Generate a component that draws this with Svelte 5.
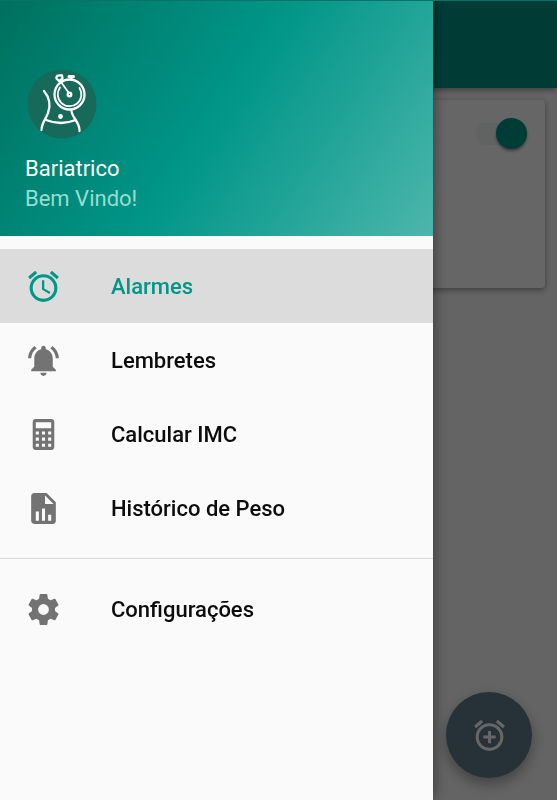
<script>
  const icons = {
    alarm:
      "M22 5.72l-4.6-3.86-1.29 1.53 4.6 3.86L22 5.72zM7.88 3.39L6.6 1.86 2 5.71l1.29 1.53 4.59-3.85zM12.5 8H11v6l4.75 2.85.75-1.23-4-2.37V8zM12 4c-4.97 0-9 4.03-9 9s4.02 9 9 9a9 9 0 0 0 0-18zm0 16c-3.87 0-7-3.13-7-7s3.13-7 7-7 7 3.13 7 7-3.13 7-7 7z",
    bell: "M7.58 4.08L6.15 2.65C3.75 4.48 2.17 7.3 2.03 10.5h2c.15-2.65 1.51-4.97 3.55-6.42zm12.39 6.42h2c-.15-3.2-1.73-6.02-4.12-7.85l-1.42 1.43c2.02 1.45 3.39 3.77 3.54 6.42zM18 11c0-3.07-1.64-5.64-4.5-6.32V4c0-.83-.67-1.5-1.5-1.5s-1.5.67-1.5 1.5v.68C7.63 5.36 6 7.92 6 11v5l-2 2v1h16v-1l-2-2v-5zm-6 11c1.1 0 2-.9 2-2h-4c0 1.1.9 2 2 2z",
    calculator:
      "M7,2H17A2,2 0 0,1 19,4V20A2,2 0 0,1 17,22H7A2,2 0 0,1 5,20V4A2,2 0 0,1 7,2M7,4V8H17V4H7M7,10V12H9V10H7M11,10V12H13V10H11M15,10V12H17V10H15M7,14V16H9V14H7M11,14V16H13V14H11M15,14V16H17V14H15M7,18V20H9V18H7M11,18V20H13V18H11M15,18V20H17V18H15Z",
    chart:
      "M13,9H18.5L13,3.5V9M6,2H14L20,8V20A2,2 0 0,1 18,22H6C4.89,22 4,21.1 4,20V4C4,2.89 4.89,2 6,2M7,20H9V14H7V20M11,20H13V12H11V20M15,20H17V16H15V20Z",
    settings:
      "M12,15.5A3.5,3.5 0 0,1 8.5,12A3.5,3.5 0 0,1 12,8.5A3.5,3.5 0 0,1 15.5,12A3.5,3.5 0 0,1 12,15.5M19.43,12.97C19.47,12.65 19.5,12.33 19.5,12C19.5,11.67 19.47,11.34 19.43,11L21.54,9.37C21.73,9.22 21.78,8.95 21.66,8.73L19.66,5.27C19.54,5.05 19.27,4.96 19.05,5.05L16.56,6.05C16.04,5.66 15.5,5.32 14.87,5.07L14.5,2.42C14.46,2.18 14.25,2 14,2H10C9.75,2 9.54,2.18 9.5,2.42L9.13,5.07C8.5,5.32 7.96,5.66 7.44,6.05L4.95,5.05C4.73,4.96 4.46,5.05 4.34,5.27L2.34,8.73C2.21,8.95 2.27,9.22 2.46,9.37L4.57,11C4.53,11.34 4.5,11.67 4.5,12C4.5,12.33 4.53,12.65 4.57,12.97L2.46,14.63C2.27,14.78 2.21,15.05 2.34,15.27L4.34,18.73C4.46,18.95 4.73,19.03 4.95,18.95L7.44,17.94C7.96,18.34 8.5,18.68 9.13,18.93L9.5,21.58C9.54,21.82 9.75,22 10,22H14C14.25,22 14.46,21.82 14.5,21.58L14.87,18.93C15.5,18.67 16.04,18.34 16.56,17.94L19.05,18.95C19.27,19.03 19.54,18.95 19.66,18.73L21.66,15.27C21.78,15.05 21.73,14.78 21.54,14.63L19.43,12.97Z",
    addAlarm:
      "M22 5.72l-4.6-3.86-1.29 1.53 4.6 3.86L22 5.72zM7.88 3.39L6.6 1.86 2 5.71l1.29 1.53 4.59-3.85zM12 4c-4.97 0-9 4.03-9 9s4.02 9 9 9a9 9 0 0 0 0-18zm0 16c-3.87 0-7-3.13-7-7s3.13-7 7-7 7 3.13 7 7-3.13 7-7 7zM13 9h-2v3H8v2h3v3h2v-3h3v-2h-3V9z",
  };

  // Each group is separated by a divider
  const groups = [
    [
      { id: "alarmes", label: "Alarmes", icon: icons.alarm },
      { id: "lembretes", label: "Lembretes", icon: icons.bell },
      { id: "imc", label: "Calcular IMC", icon: icons.calculator },
      { id: "historico", label: "Histórico de Peso", icon: icons.chart },
    ],
    [{ id: "configuracoes", label: "Configurações", icon: icons.settings }],
  ];

  let current = $state("alarmes");
  let enabled = $state(true);
</script>

<div class="screen">
  <header class="toolbar"></header>
  <main>
    <section class="card">
      <input
        class="switch"
        type="checkbox"
        role="switch"
        aria-label="Ativar alarme"
        bind:checked={enabled}
      />
    </section>
  </main>
  <button class="fab" aria-label="Adicionar alarme">
    <svg viewBox="0 0 24 24"><path d={icons.addAlarm} /></svg>
  </button>
</div>

<div class="scrim"></div>

<aside class="drawer">
  <div class="profile">
    <svg class="avatar" viewBox="0 0 70 70" aria-hidden="true">
      <circle class="disc" cx="35" cy="35" r="34.500" />
      <g class="lines">
        <path d="M17 22C22 28 24 36 21 44C19 50 14.500 54 14.500 61" />
        <path d="M44.500 42C45 49 53 53 52.500 62" />
        <path d="M19 51Q34 57 48.500 51" />
        <circle cx="42.500" cy="25.500" r="15" />
        <path class="thin" d="M33 18.500A11.800 11.800 0 1 0 52.500 19" />
        <circle cx="42.500" cy="25.500" r="1.800" />
        <path class="thin" d="M41.500 23.500L34 13" />
        <path d="M32.500 12.500L29.500 9.500C29 6.500 32 6 35 6.500L35.500 9.500L32.500 12" />
        <path class="crown" d="M42 7.500H46.500" />
        <path d="M44.500 8V10.500" />
      </g>
      <circle class="navel" cx="33.500" cy="47.500" r="2.400" />
    </svg>
    <span class="name">Bariatrico</span>
    <span class="welcome">Bem Vindo!</span>
  </div>

  <nav>
    {#each groups as group}
      <ul>
        {#each group as item}
          <li>
            <a
              href="#{item.id}"
              class:active={current === item.id}
              onclick={() => (current = item.id)}
            >
              <svg viewBox="0 0 24 24" aria-hidden="true"><path d={item.icon} /></svg>
              {item.label}
            </a>
          </li>
        {/each}
      </ul>
    {/each}
  </nav>
</aside>

<div class="statusbar"></div>

<style>
  :global(body) {
    font-family: Roboto, "Noto Sans", sans-serif;
    background: #fafafa;
  }

  .screen {
    min-height: 100vh;
    background: #fafafa;
  }

  .toolbar {
    height: 88px;
    background: #009688;
    box-shadow: 0 2px 6px rgba(0, 0, 0, 0.4);
  }

  main {
    padding: 12px;
  }

  .card {
    display: flex;
    justify-content: flex-end;
    align-items: flex-start;
    box-sizing: border-box;
    min-height: 188px;
    padding: 18px;
    background: #fff;
    border-radius: 4px;
    box-shadow: 0 2px 6px rgba(0, 0, 0, 0.4);
  }

  .switch {
    appearance: none;
    display: flex;
    align-items: center;
    width: 50px;
    height: 31px;
    margin: 0;
    background: linear-gradient(#f0f7f5, #f0f7f5) center / 100% 22px no-repeat;
    border-radius: 16px;
  }

  .switch::before {
    content: "";
    width: 31px;
    height: 31px;
    border-radius: 50%;
    background: #fafafa;
    box-shadow: 0 2px 3px rgba(0, 0, 0, 0.4);
  }

  .switch:checked::before {
    margin-left: auto;
    background: #009688;
  }

  .fab {
    position: fixed;
    right: 25px;
    bottom: 22px;
    display: grid;
    place-items: center;
    width: 86px;
    height: 86px;
    padding: 0;
    border: none;
    border-radius: 50%;
    background: #607d8b;
    box-shadow: 0 6px 14px rgba(0, 0, 0, 0.35);
  }

  svg {
    flex: none;
    width: 37px;
    height: 37px;
    fill: currentColor;
  }

  .fab svg {
    color: #fff;
  }

  .scrim {
    position: fixed;
    inset: 0;
    background: rgba(0, 0, 0, 0.6);
  }

  .drawer {
    position: fixed;
    top: 0;
    bottom: 0;
    left: 0;
    width: calc(100% - 124px);
    max-width: 494px;
    overflow-y: auto;
    background: #fafafa;
    box-shadow: 0 0 14px rgba(0, 0, 0, 0.5);
  }

  .profile {
    display: flex;
    flex-direction: column;
    justify-content: flex-end;
    box-sizing: border-box;
    height: 236px;
    padding: 0 25px 22px;
    background: linear-gradient(124deg, #00705f, #009688 50%, #4db6ac);
  }

  .avatar {
    width: 70px;
    height: 70px;
    margin: 0 2px 15px;
  }

  .disc {
    fill: #17695a;
  }

  .lines {
    fill: none;
    stroke: #fff;
    stroke-width: 2.3;
    stroke-linecap: round;
    stroke-linejoin: round;
  }

  .thin {
    stroke-width: 1.8;
  }

  .crown {
    stroke-width: 3;
  }

  .navel {
    fill: #fff;
  }

  .name,
  .welcome {
    font-size: 22px;
    line-height: 30px;
    color: #fff;
  }

  .welcome {
    color: #94ded4;
  }

  ul {
    margin: 0;
    padding: 13px 0;
    list-style: none;
  }

  ul + ul {
    border-top: 1px solid #d9d9d9;
  }

  nav a {
    display: flex;
    align-items: center;
    gap: 49px;
    height: 74px;
    padding: 0 25px;
    font-size: 22px;
    font-weight: 500;
    color: #0c0c0c;
    text-decoration: none;
  }

  nav svg {
    color: #737373;
  }

  nav a.active,
  nav a.active svg {
    color: #009688;
  }

  nav a.active {
    background: #dcdcdc;
  }

  .statusbar {
    position: fixed;
    top: 0;
    left: 0;
    right: 0;
    height: 1px;
    background: #0b7266;
  }
</style>
